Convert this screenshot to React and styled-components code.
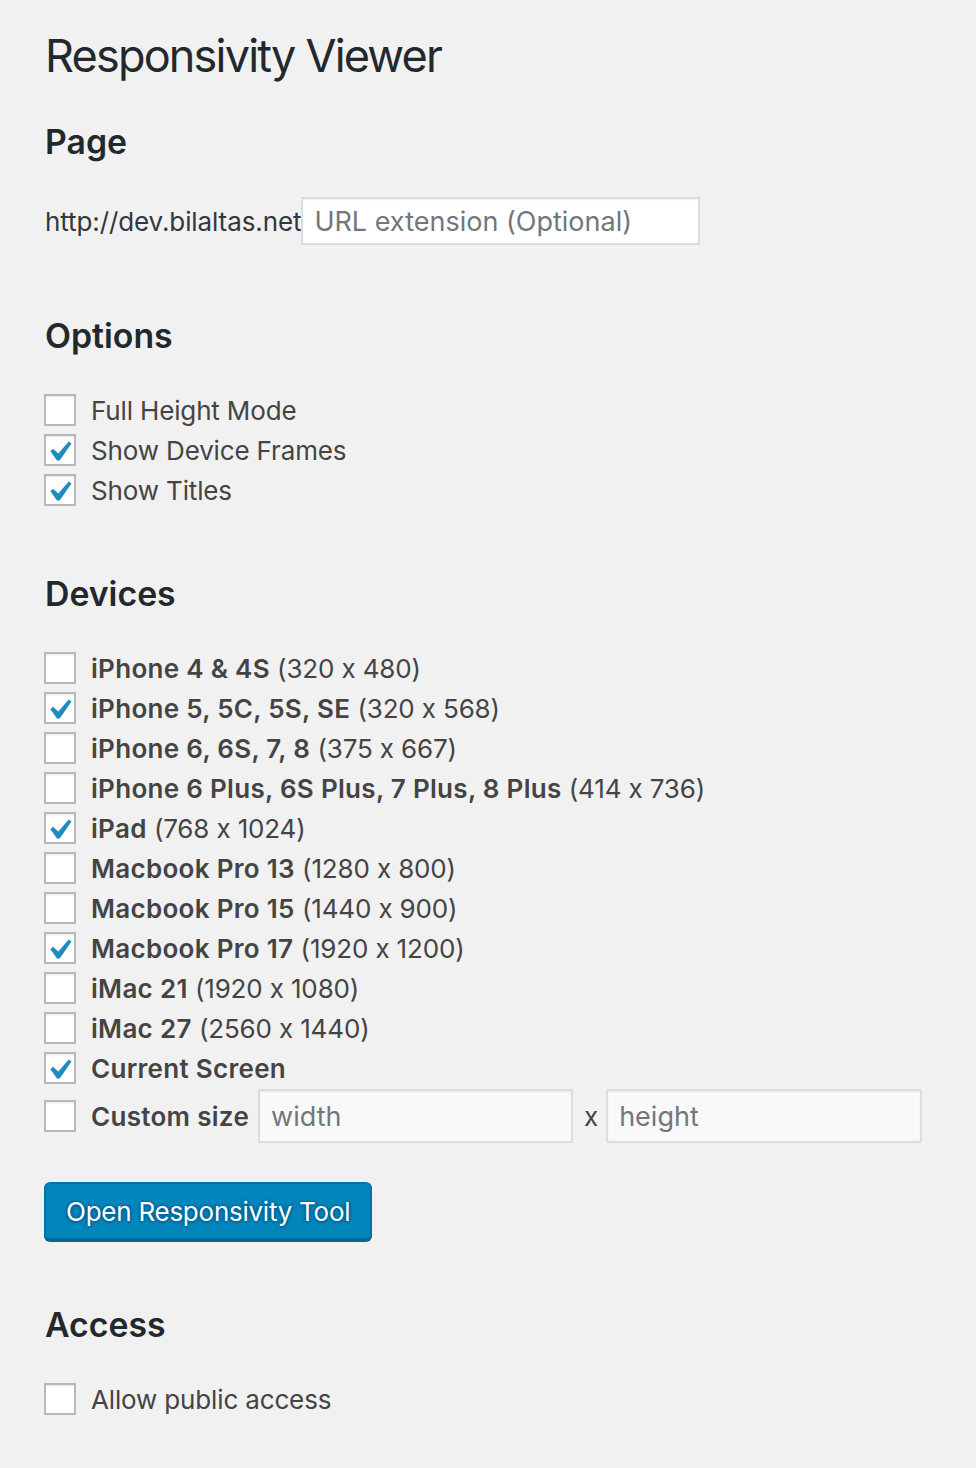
import React from "react";
import styled, { createGlobalStyle } from "styled-components";

const Global = createGlobalStyle`
  html, body { margin: 0; padding: 0; background: #f1f1f1; }
  body {
    font-family: Inter, Roboto, "Liberation Sans", sans-serif;
    font-feature-settings: "calt" 0;
    color: #444;
    -webkit-font-smoothing: antialiased;
  }
  * { box-sizing: border-box; }
`;

const Page = styled.div`
  padding: 26px 0 60px 44px;
  min-height: 1468px;
`;

const Title = styled.h1`
  margin: 0;
  font-size: 45px;
  line-height: 60px;
  font-weight: 400;
  letter-spacing: -1.8px;
  color: #23282d;
  padding-left: 1px;
`;

const Heading = styled.h2`
  margin: ${(p) => p.$top}px 0 0;
  font-size: 33.8px;
  line-height: 47px;
  font-weight: 600;
  color: #23282d;
  padding-left: 1px;
`;

const UrlRow = styled.div`
  display: flex;
  align-items: center;
  margin-top: 32px;
  height: 48px;
  font-size: 26px;
  padding-left: 1px;
`;

const Prefix = styled.span`
  color: #32373c;
  letter-spacing: -0.1px;
`;

const TextInput = styled.input`
  font-family: inherit;
  font-feature-settings: "calt" 0;
  font-size: 27px;
  letter-spacing: 0;
  color: #32373c;
  width: ${(p) => p.$w}px;
  height: ${(p) => p.$h}px;
  margin-left: ${(p) => p.$ml || 0}px;
  padding: 0 11px;
  border: 2px solid #ddd;
  border-radius: 0;
  background: ${(p) => p.$bg || "#fff"};
  box-shadow: inset 0 1px 2px rgba(0, 0, 0, 0.07);
  outline: none;
  &::placeholder { color: #72777c; opacity: 1; }
`;

const List = styled.div`
  margin-top: ${(p) => p.$top}px;
  display: flex;
  flex-direction: column;
`;

const Row = styled.label`
  display: flex;
  align-items: center;
  height: ${(p) => p.$h || 40}px;
  margin-top: ${(p) => p.$mt || 0}px;
  font-size: 26px;
  letter-spacing: -0.15px;
  color: #444;
  cursor: pointer;
`;

const Box = styled.span`
  flex: 0 0 32px;
  width: 32px;
  height: 32px;
  border: 2px solid #b4b9be;
  background: #fff;
  box-shadow: inset 0 1px 2px rgba(0, 0, 0, 0.1);
  display: flex;
  align-items: center;
  justify-content: center;
  margin-right: 15px;
`;

const Check = styled.svg`
  width: 22px;
  height: 20px;
  margin-left: 2px;
  margin-top: 1px;
`;

const Bold = styled.span`
  font-weight: 600;
  letter-spacing: 0.3px;
`;

const Times = styled.span`
  margin: 0 8px 0 11px;
  color: #444;
`;

const Button = styled.button`
  margin-top: 39px;
  height: 58px;
  padding: 0 20px;
  font-family: inherit;
  font-size: 26px;
  letter-spacing: -0.25px;
  color: #fff;
  background: #0085ba;
  border: 2px solid #0073aa;
  border-bottom-color: #006799;
  border-radius: 6px;
  box-shadow: 0 2px 0 #006799;
  text-shadow: 0 -1px 2px #006799, 2px 0 2px #006799, 0 2px 2px #006799, -2px 0 2px #006799;
  cursor: pointer;
`;

function Checkbox({ checked }) {
  return (
    <Box>
      {checked && (
        <Check viewBox="5.6 4.7 10.8 9.7">
          <path
            fill="#1e8cbe"
            d="M14.83 4.89l1.34.94-5.81 8.38H9.02L5.78 9.67l1.34-1.25 2.57 2.4z"
          />
        </Check>
      )}
    </Box>
  );
}

const options = [
  { label: "Full Height Mode", checked: false },
  { label: "Show Device Frames", checked: true },
  { label: "Show Titles", checked: true },
];

const devices = [
  { name: "iPhone 4 & 4S", size: "(320 x 480)", checked: false },
  { name: "iPhone 5, 5C, 5S, SE", size: "(320 x 568)", checked: true },
  { name: "iPhone 6, 6S, 7, 8", size: "(375 x 667)", checked: false },
  { name: "iPhone 6 Plus, 6S Plus, 7 Plus, 8 Plus", size: "(414 x 736)", checked: false },
  { name: "iPad", size: "(768 x 1024)", checked: true },
  { name: "Macbook Pro 13", size: "(1280 x 800)", checked: false },
  { name: "Macbook Pro 15", size: "(1440 x 900)", checked: false },
  { name: "Macbook Pro 17", size: "(1920 x 1200)", checked: true },
  { name: "iMac 21", size: "(1920 x 1080)", checked: false },
  { name: "iMac 27", size: "(2560 x 1440)", checked: false },
  { name: "Current Screen", size: "", checked: true },
];

export default function App() {
  return (
    <>
      <Global />
      <Page>
        <Title>Responsivity Viewer</Title>

        <Heading $top={32}>Page</Heading>
        <UrlRow>
          <Prefix>http://dev.bilaltas.net</Prefix>
          <TextInput $w={399} $h={48} placeholder="URL extension (Optional)" />
        </UrlRow>

        <Heading $top={67}>Options</Heading>
        <List $top={31}>
          {options.map((o) => (
            <Row key={o.label}>
              <Checkbox checked={o.checked} />
              {o.label}
            </Row>
          ))}
        </List>

        <Heading $top={60}>Devices</Heading>
        <List $top={31}>
          {devices.map((d) => (
            <Row key={d.name}>
              <Checkbox checked={d.checked} />
              <Bold>{d.name}</Bold>
              {d.size && <>&nbsp;{d.size}</>}
            </Row>
          ))}
          <Row as="div" $h={54} $mt={1}>
            <Checkbox checked={false} />
            <Bold>Custom size</Bold>
            <TextInput $w={315} $h={54} $ml={9} $bg="#f9f9f9" placeholder="width" />
            <Times>x</Times>
            <TextInput $w={316} $h={54} $bg="#f9f9f9" placeholder="height" />
          </Row>
        </List>

        <Button>Open Responsivity Tool</Button>

        <Heading $top={61}>Access</Heading>
        <List $top={31}>
          <Row>
            <Checkbox checked={false} />
            Allow public access
          </Row>
        </List>
      </Page>
    </>
  );
}
